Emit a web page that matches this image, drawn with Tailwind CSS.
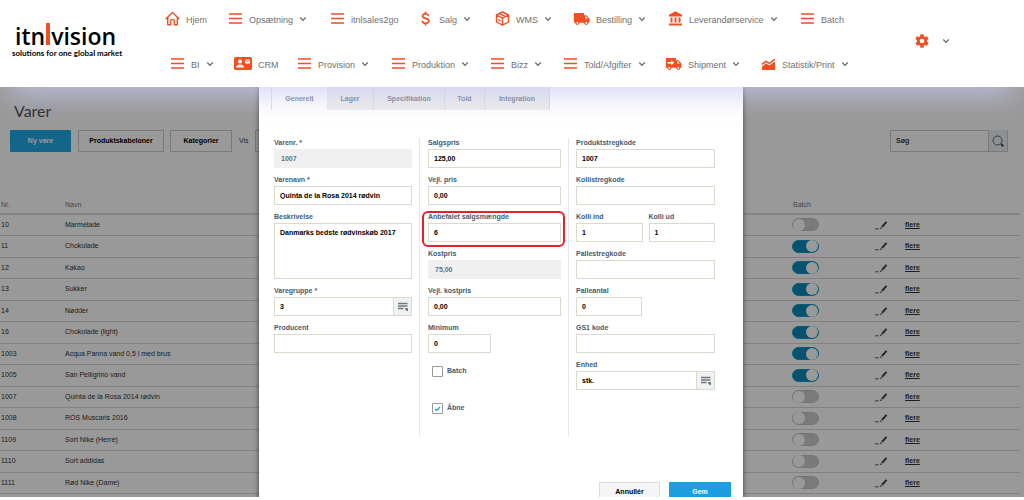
<!DOCTYPE html>
<html lang="da">
<head>
<meta charset="utf-8">
<title>itn|vision – Varer</title>
<script src="https://cdn.jsdelivr.net/npm/@tailwindcss/browser@4"></script>
</head>
<body class="h-screen flex flex-col overflow-hidden bg-white font-['Liberation_Sans',Arial,sans-serif] text-[7px] leading-[10px] text-[#333]">

<svg class="hidden" aria-hidden="true">
  <symbol id="menu" viewBox="0 0 15 15"><path d="M1 3h13M1 7.500h13M1 12h13" stroke="#f04e23" stroke-width="1.500" fill="none"/></symbol>
  <symbol id="home" viewBox="0 0 15 15"><path d="M1 7.800 7.500 1.500 14 7.800M2.700 6.500V13.700H5.800V9.600a1 1 0 0 1 1-1h1.400a1 1 0 0 1 1 1v4.100h3.100V6.500" stroke="#f04e23" stroke-width="1.400" fill="none" stroke-linejoin="round" stroke-linecap="round"/></symbol>
  <symbol id="dollar" viewBox="0 0 15 15"><path d="M10.700 4.800C10.300 3.400 9.200 2.800 7.500 2.800 5.600 2.800 4.500 3.700 4.500 5c0 1.400 1.200 1.900 3 2.400 2.100.5 3.300 1.100 3.300 2.700 0 1.400-1.300 2.200-3.200 2.200-1.900 0-3.200-.8-3.400-2.400M7.500.8v2M7.500 12.200v2.200" stroke="#f04e23" stroke-width="1.700" fill="none"/></symbol>
  <symbol id="box" viewBox="0 0 15 15"><path d="M7.500 1 13.500 4v7L7.500 14.200 1.500 11V4ZM1.500 4l6 3.200 6-3.200M7.500 7.200v7M4.500 2.600l6 3.100M3.300 8.600l2.200 1.200" stroke="#f04e23" stroke-width="1.400" fill="none" stroke-linejoin="round"/></symbol>
  <symbol id="truck" viewBox="0 0 17 15"><path d="M1.800 2h9.200v2.300h2.600L16.500 7.800v4H15.300a2 2 0 0 1-4 0H6.400a2 2 0 0 1-4 0H.8V3a1 1 0 0 1 1-1Z" fill="#f04e23"/><path d="M12 5.500h1.300l1.500 2H12Z" fill="#fff"/><circle cx="4.400" cy="11.900" r="1.500" fill="#fff" stroke="#f04e23"/><circle cx="13.300" cy="11.900" r="1.500" fill="#fff" stroke="#f04e23"/></symbol>
  <symbol id="ship" viewBox="0 0 17 15"><use href="#truck"/><path d="M2.500 6h3.500V4l3.300 2.800L6 9.500V7.600H2.500Z" fill="#fff"/></symbol>
  <symbol id="bank" viewBox="0 0 15 15"><path d="M7.500.3 14 3.800v1.600H1V3.800ZM2.500 6.500h2v5h-2ZM6.500 6.500h2v5h-2ZM10.500 6.500h2v5h-2ZM1 12.500h13v2H1Z" fill="#f04e23"/></symbol>
  <symbol id="card" viewBox="0 0 18 15"><rect x="0" y="1" width="18" height="13" rx="1.500" fill="#f04e23"/><circle cx="6" cy="5.500" r="2" fill="#fff"/><path d="M2 11.500c0-4 8-4 8 0ZM11 3.500h5v4h-5Z" fill="#fff"/><path d="m11 3.800 2.500 1.900L16 3.800" stroke="#f04e23" stroke-width=".8" fill="none"/></symbol>
  <symbol id="chart" viewBox="0 0 15 15"><path d="M1 14V10.500L5 7.500l3.500 1.800L14 5.500V14Z" fill="#f04e23"/><path d="m1 8.300 4-3 3.500 2L14 3.200" stroke="#f04e23" stroke-width="1.500" fill="none"/></symbol>
  <symbol id="chev" viewBox="0 0 8 8"><path d="m1.300 2.500 2.700 2.800 2.700-2.800" stroke="#666" stroke-width="1.200" fill="none"/></symbol>
  <symbol id="gear" viewBox="0 0 24 24"><path fill="#f04e23" d="M19.430 12.980c.04-.32.070-.640.070-.980s-.030-.660-.070-.980l2.110-1.650c.190-.150.240-.420.120-.640l-2-3.460c-.120-.220-.390-.300-.610-.220l-2.490 1c-.520-.400-1.080-.730-1.690-.980l-.380-2.650A.488.488 0 0 0 14 2h-4c-.250 0-.460.180-.490.420l-.380 2.650c-.610.250-1.170.590-1.690.980l-2.490-1c-.230-.090-.490 0-.610.220l-2 3.460c-.130.220-.070.490.120.640l2.110 1.650c-.040.320-.070.650-.070.980s.030.660.070.980l-2.110 1.650c-.190.150-.240.420-.120.640l2 3.460c.120.220.390.300.610.220l2.490-1c.520.400 1.080.730 1.690.980l.380 2.650c.030.240.240.420.490.420h4c.250 0 .460-.180.490-.420l.380-2.650c.610-.250 1.170-.590 1.690-.980l2.490 1c.230.090.490 0 .610-.220l2-3.460c.120-.220.070-.490-.120-.640ZM12 15.500a3.500 3.500 0 1 1 0-7 3.500 3.500 0 0 1 0 7Z"/></symbol>
  <symbol id="lookup" viewBox="0 0 12 10"><path d="M1 1.500h9.500M1 4h9.500M1 6.500h5.500" stroke="#777" stroke-width="1.400"/><path d="M8 6h3v3H9.800L8 7.200Z" fill="#777"/></symbol>
  <symbol id="pencil" viewBox="0 0 13 10"><path d="M0 8.800h3.800" stroke="#555" stroke-width=".9"/><path d="m5 9 .6-2L7 8.400ZM6.200 6.300 10.800 1.300l1.500 1.300-4.700 5.100Z" fill="#444"/></symbol>
</svg>

<header class="relative z-20 flex h-[87px] shrink-0 bg-white text-[9px] leading-[12px] text-[#707070] shadow-[0_18px_28px_-10px_rgba(200,200,240,0.75)]">
  <a href="#" class="block w-[165px] shrink-0 pl-3 pt-[25px] text-black">
    <span class="flex h-[22px] items-center pl-[3px] font-['Open_Sans',sans-serif] text-[23px] font-semibold leading-[22px]">itn<i class="mx-px mb-1 h-[22px] w-1 bg-[#f04e23]"></i>vision</span>
    <span class="block whitespace-nowrap font-[Lato,sans-serif] text-[8px] font-bold leading-[12px]">solutions for one global market</span>
  </a>
  <nav class="flex grow flex-col gap-[30px] pt-[11px]">
    <div id="nav1" class="grid grid-cols-[63px_102px_88px_77px_78px_95px_132px_60px]"></div>
    <div id="nav2" class="grid grid-cols-[64px_63px_94px_99px_73px_102px_96px_100px] pl-[5px]"></div>
  </nav>
  <button type="button" aria-label="Indstillinger" class="mr-[74px] flex items-center gap-3 self-start pt-[33px]">
    <svg class="size-4"><use href="#gear"/></svg><svg class="size-2"><use href="#chev"/></svg>
  </button>
</header>

<div class="relative mb-[3px] min-h-0 grow overflow-hidden">
  <main>
    <h1 class="pl-[14px] pt-[14px] font-[Lato,sans-serif] text-[16px] font-normal leading-5 text-[#444]">Varer</h1>
    <div class="mt-[9px] flex h-[22px] items-stretch pl-[10px] pr-4 font-bold text-black">
      <button type="button" class="w-[61px] rounded-[1px] bg-[#20a8e6] text-white">Ny vare</button>
      <button type="button" class="ml-[7px] w-[86px] border border-[#ccc]">Produktskabeloner</button>
      <button type="button" class="ml-[6px] w-[62px] border border-[#ccc]">Kategorier</button>
      <label for="vis" class="ml-[7px] self-center font-normal text-[#444]">Vis</label>
      <select id="vis" class="ml-[6px] w-10 appearance-none border border-[#ccc] pl-2"><option>20</option></select>
      <input type="text" aria-label="Søg" value="Søg" class="ml-auto w-[99px] border border-[#ccc] px-[5px] text-[#444]">
      <button type="button" aria-label="Søg" class="grid w-[19px] place-items-center border-b border-r border-[#ccc] bg-[#e8f0f4]">
        <svg class="size-3" viewBox="0 0 12 12"><circle cx="5.500" cy="5.500" r="4.500" fill="none" stroke="#666"/><path d="m9 9 2.300 2.300" stroke="#444" stroke-width="2"/></svg>
      </button>
    </div>
    <table class="mt-[45px] w-[calc(100%-4px)] table-fixed border-collapse text-left text-[#333]">
      <colgroup><col class="w-16"><col><col class="w-[83px]"><col class="w-[29px]"><col class="w-[116px]"></colgroup>
      <thead><tr class="h-[17px] border-b-2 border-[#dedede] text-[#777]"><th class="pl-px font-normal">Nr.</th><th class="pl-px font-normal">Navn</th><th class="pl-px font-normal">Batch</th><th></th><th></th></tr></thead>
      <tbody id="rows"></tbody>
    </table>
  </main>

  <div class="absolute inset-0 z-10 flex justify-center bg-black/40 pr-[22px]">
    <section role="dialog" aria-label="Vare" class="flex h-[500px] w-[484px] shrink-0 flex-col bg-white shadow-[0_0_5px_rgba(0,0,0,0.6)]">
      <div role="tablist" class="ml-3 flex h-[23px] shrink-0 font-bold text-[#6e7a8a]">
        <button type="button" role="tab" aria-selected="true" class="w-14 border-l border-[#e0e0e0]">Generelt</button>
        <button type="button" role="tab" class="w-[47px] border-r border-[#dcdcdc] bg-[#ececec]">Lager</button>
        <button type="button" role="tab" class="w-[71px] border-r border-[#dcdcdc] bg-[#ececec]">Specifikation</button>
        <button type="button" role="tab" class="w-10 border-r border-[#dcdcdc] bg-[#ececec]">Told</button>
        <button type="button" role="tab" class="w-[65px] border-r border-[#dcdcdc] bg-[#ececec]">Integration</button>
      </div>
      <form class="mt-7 flex h-[298px] shrink-0 pl-[15px] pr-7 font-bold text-[#3f5b70]">
        <div class="w-[146px] shrink-0 border-r border-[#e6e6e6] pr-[7px]">
          <label class="mb-[7px] block"><span class="block h-[11px]">Varenr. *</span><input disabled value="1007" class="block h-[19px] w-full bg-[#f0f0f0] px-[7px] text-[#5c7487]"></label>
          <label class="mb-[7px] block"><span class="block h-[11px]">Varenavn *</span><input value="Quinta de la Rosa 2014 rødvin" class="block h-[19px] w-full border border-[#d9d9cc] px-[5px] text-black"></label>
          <label class="mb-[7px] block"><span class="block h-[11px]">Beskrivelse</span><textarea class="block h-[56px] w-full resize-none border border-[#d9d9cc] px-[5px] py-1 text-black">Danmarks bedste rødvinskøb 2017</textarea></label>
          <div class="mb-[7px]"><label for="grp" class="block h-[11px]">Varegruppe *</label><div class="flex h-[19px] border border-[#d9d9cc]"><input id="grp" value="3" class="min-w-0 grow px-[5px] text-black"><button type="button" aria-label="Vælg varegruppe" class="grid w-[18px] place-items-center border-l border-[#d9d9cc] bg-[#edf2f5]"><svg class="h-[10px] w-3"><use href="#lookup"/></svg></button></div></div>
          <label class="block"><span class="block h-[11px]">Producent</span><input class="block h-[19px] w-full border border-[#d9d9cc] px-[5px] text-black"></label>
        </div>
        <div class="w-[149px] shrink-0 border-r border-[#e6e6e6] pl-2 pr-[7px]">
          <label class="mb-[7px] block"><span class="block h-[11px]">Salgspris</span><input value="125,00" class="block h-[19px] w-full border border-[#d9d9cc] px-[5px] text-black"></label>
          <label class="mb-[7px] block"><span class="block h-[11px]">Vejl. pris</span><input value="0,00" class="block h-[19px] w-full border border-[#d9d9cc] px-[5px] text-black"></label>
          <label class="relative mb-[7px] block"><span class="block h-[11px]">Anbefalet salgsmængde</span><input value="6" class="block h-[19px] w-full border border-[#d9d9cc] px-[5px] text-black"><i class="absolute -bottom-[5px] -left-[6px] -right-1 -top-px rounded-[6px] border-2 border-[#e8202c]"></i></label>
          <label class="mb-[7px] block"><span class="block h-[11px]">Kostpris</span><input disabled value="75,00" class="block h-[19px] w-full bg-[#f0f0f0] px-[7px] text-[#5c7487]"></label>
          <label class="mb-[7px] block"><span class="block h-[11px]">Vejl. kostpris</span><input value="0,00" class="block h-[19px] w-full border border-[#d9d9cc] px-[5px] text-black"></label>
          <label class="mb-[7px] block"><span class="block h-[11px]">Minimum</span><input value="0" class="block h-[19px] w-[63px] border border-[#d9d9cc] px-[5px] text-black"></label>
          <label class="flex h-[37px] items-start gap-1 pl-1 pt-[6px]"><input type="checkbox" class="size-[11px] appearance-none rounded-[1px] border border-[#999] bg-white">Batch</label>
          <label class="flex h-[37px] items-start gap-1 pl-1 pt-[6px]"><span class="grid size-[11px]"><input type="checkbox" checked class="col-start-1 row-start-1 size-[11px] appearance-none rounded-[1px] border border-[#999] bg-white"><svg class="col-start-1 row-start-1 size-[11px]" viewBox="0 0 11 11"><path d="m3 5.700 1.800 1.800L8 4" fill="none" stroke="#25a5df" stroke-width="1.500"/></svg></span>Åbne</label>
        </div>
        <div class="grow pl-[7px]">
          <label class="mb-[7px] block"><span class="block h-[11px]">Produktstregkode</span><input value="1007" class="block h-[19px] w-full border border-[#d9d9cc] px-[5px] text-black"></label>
          <label class="mb-[7px] block"><span class="block h-[11px]">Kollistregkode</span><input class="block h-[19px] w-full border border-[#d9d9cc] px-[5px] text-black"></label>
          <div class="mb-[7px] grid grid-cols-2 gap-[6px]">
            <label class="block"><span class="block h-[11px]">Kolli ind</span><input value="1" class="block h-[19px] w-full border border-[#d9d9cc] px-[5px] text-black"></label>
            <label class="block"><span class="block h-[11px]">Kolli ud</span><input value="1" class="block h-[19px] w-full border border-[#d9d9cc] px-[5px] text-black"></label>
          </div>
          <label class="mb-[7px] block"><span class="block h-[11px]">Pallestregkode</span><input class="block h-[19px] w-full border border-[#d9d9cc] px-[5px] text-black"></label>
          <label class="mb-[7px] block"><span class="block h-[11px]">Palleantal</span><input value="0" class="block h-[19px] w-[66px] border border-[#d9d9cc] px-[5px] text-black"></label>
          <label class="mb-[7px] block"><span class="block h-[11px]">GS1 kode</span><input class="block h-[19px] w-full border border-[#d9d9cc] px-[5px] text-black"></label>
          <div><label for="enh" class="block h-[11px]">Enhed</label><div class="flex h-[19px] border border-[#d9d9cc]"><input id="enh" value="stk." class="min-w-0 grow px-[5px] text-black"><button type="button" aria-label="Vælg enhed" class="grid w-[18px] place-items-center border-l border-[#d9d9cc] bg-[#edf2f5]"><svg class="h-[10px] w-3"><use href="#lookup"/></svg></button></div></div>
        </div>
      </form>
      <footer class="mt-[46px] flex h-5 shrink-0 justify-end gap-[9px] pr-3 font-bold">
        <button type="button" class="w-[61px] border border-[#ddd] bg-[#f5f5f5] text-black">Annullér</button>
        <button type="button" class="w-[62px] bg-[#1b9fe0] text-white">Gem</button>
      </footer>
    </section>
  </div>
</div>

<script>
const nav = {
  nav1: [['home','Hjem'],['menu','Opsætning',1],['menu','itnlsales2go'],['dollar','Salg',1],['box','WMS',1],['truck','Bestilling',1],['bank','Leverandørservice',1],['menu','Batch']],
  nav2: [['menu','BI',1],['card','CRM'],['menu','Provision',1],['menu','Produktion',1],['menu','Bizz',1],['menu','Told/Afgifter',1],['ship','Shipment',1],['chart','Statistik/Print',1]]
};
const iconClass = { card: 'h-[15px] w-[18px]', truck: 'h-[15px] w-[17px]', ship: 'h-[15px] w-[17px]' };
for (const id in nav) {
  document.getElementById(id).innerHTML = nav[id].map(([icon, text, more]) =>
    `<a href="#" class="flex h-[15px] items-center gap-[6px] whitespace-nowrap"><svg class="shrink-0 ${iconClass[icon] || 'size-[15px]'}"><use href="#${icon}"/></svg><span class="pt-[2px]">${text}</span>${more ? '<svg class="size-2 shrink-0"><use href="#chev"/></svg>' : ''}</a>`).join('');
}
const items = [['10','Marmelade',0],['11','Chokolade',1],['12','Kakao',1],['13','Sukker',1],['14','Nødder',1],['16','Chokolade (light)',1],['1003','Acqua Panna vand 0,5 l med brus',1],['1005','San Pelligrino vand',1],['1007','Quinta de la Rosa 2014 rødvin',0],['1008','RÖS Muscaris 2016',0],['1109','Sort Nike (Herre)',0],['1110','Sort addidas',0],['1111','Rød Nike (Dame)',0]];
document.getElementById('rows').innerHTML = items.map(([nr, name, on]) =>
  `<tr class="h-[21px] border-b border-[#d8d8d8] even:h-[22px]"><td class="pl-px">${nr}</td><td class="pl-px">${name}</td>
  <td><label class="flex h-[13px] w-[27px] items-center rounded-full border border-[#c4c4c4] bg-[#cbcbcb] has-checked:justify-end has-checked:border-[#0e98cc] has-checked:bg-[#0b88b4]"><input type="checkbox" aria-label="Batch ${nr}" ${on ? 'checked' : ''} class="size-[12px] appearance-none rounded-full bg-white"></label></td>
  <td><button type="button" aria-label="Rediger ${nr}" class="block"><svg class="h-[10px] w-[13px]"><use href="#pencil"/></svg></button></td>
  <td class="pl-px"><a href="#" class="font-bold underline">flere</a></td></tr>`).join('');
</script>
</body>
</html>
